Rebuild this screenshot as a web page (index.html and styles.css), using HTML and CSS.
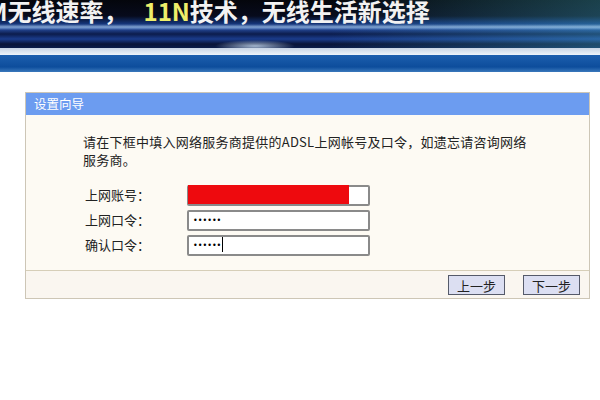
FILE: index.html
```html
<!DOCTYPE html>
<html lang="zh-CN">
  <head>
    <meta charset="UTF-8" />
    <meta name="viewport" content="width=device-width, initial-scale=1.0" />
    <title>设置向导</title>
    <link rel="stylesheet" href="styles.css">
  </head>
  <body>
    <div class="banner">
      <h1 class="slogan">M无线速率，<span class="hl">11N</span>技术，无线生活新选择</h1>
    </div>
    <div class="strip"></div>
    <div class="navbar"></div>

    <form class="wizard" action="">
      <div class="wizard-head">设置向导</div>
      <div class="wizard-body">
        <p class="tip">请在下框中填入网络服务商提供的ADSL上网帐号及口令，如遗忘请咨询网络服务商。</p>
        <div class="row">
          <label for="user">上网账号：</label>
          <div class="field">
            <input type="text" id="user" name="user" value="" />
            <span class="mask"></span>
          </div>
        </div>
        <div class="row">
          <label for="pwd">上网口令：</label>
          <div class="field">
            <input type="password" id="pwd" name="pwd" value="123456" />
          </div>
        </div>
        <div class="row">
          <label for="pwd2">确认口令：</label>
          <div class="field">
            <input type="password" id="pwd2" name="pwd2" value="123456" />
            <span class="caret"></span>
          </div>
        </div>
      </div>
      <div class="wizard-foot">
        <button type="button">上一步</button>
        <button type="button">下一步</button>
      </div>
    </form>
  </body>
</html>
```

FILE: styles.css
```css
* {
  padding: 0;
  margin: 0;
  box-sizing: border-box;
}
body {
  background: #fff;
  font-family: "Noto Sans CJK SC", "Noto Sans", sans-serif;
  font-size: 12px;
  color: #222;
}
.banner {
  height: 48px;
  overflow: hidden;
  background:
    radial-gradient(ellipse 40px 6px at 255px 46px, rgba(200, 220, 240, 0.8), rgba(200, 220, 240, 0)),
    linear-gradient(180deg, rgba(0, 0, 0, 0) 24px, rgba(200, 230, 245, 0.55) 27px, rgba(0, 0, 0, 0) 30px),
    linear-gradient(90deg, rgba(0, 0, 0, 0) 0, rgba(0, 0, 0, 0) 55%, rgba(80, 200, 220, 0.3) 100%),
    linear-gradient(180deg, #04060c 0, #070b1c 16px, #123070 23px, #2a52a8 28px, #0c1c4c 34px, #1a3c8c 39px, #0a1538 44px, #0b1d4a 48px);
}
.slogan {
  font-size: 24px;
  line-height: 20px;
  padding-top: 1px;
  font-weight: 700;
  color: #f2f2f2;
  margin-left: -13px;
  white-space: nowrap;
}
.slogan .hl {
  color: #eeee6a;
  margin-left: 16px;
}
.strip {
  height: 7px;
  background: linear-gradient(180deg, #c8d4e4, #eef4fa);
}
.navbar {
  height: 17px;
  background: linear-gradient(180deg, #1d5fae 0, #0d4d9c 70%, #3a78bc 100%);
}
.wizard {
  width: 565px;
  margin: 20px 0 0 25px;
  border: 1px solid #cdc6b6;
  background: #fdfaf3;
}
.wizard-head {
  height: 22px;
  line-height: 22px;
  padding-left: 8px;
  background: #6c9cf0;
  color: #fff;
  font-size: 12.5px;
}
.wizard-body {
  padding: 18px 0 13px 57px;
}
.tip {
  width: 452px;
  font-size: 13px;
  line-height: 18px;
  letter-spacing: 0.25px;
  margin-bottom: 13px;
}
.row {
  display: flex;
  align-items: center;
  height: 25px;
}
.row label {
  width: 104px;
  padding-left: 2px;
  font-size: 13px;
}
.field {
  position: relative;
  width: 183px;
  height: 21px;
}
.field input {
  width: 100%;
  height: 100%;
  border: 2px solid #8a8a8a;
  border-radius: 2px;
  background: #fff;
  padding-left: 4px;
  font-size: 8px;
  font-family: "DejaVu Sans", sans-serif;
  outline: none;
}
.mask {
  position: absolute;
  left: 1px;
  top: 1px;
  width: 161px;
  height: 19px;
  background: #ee0a0e;
}
.caret {
  position: absolute;
  left: 35px;
  top: 3px;
  width: 1px;
  height: 15px;
  background: #000;
}
.wizard-foot {
  height: 28px;
  border-top: 1px solid #d6ceb8;
  background: #faf6f0;
  display: flex;
  justify-content: flex-end;
  align-items: center;
  gap: 18px;
  padding-right: 9px;
}
.wizard-foot button {
  width: 57px;
  height: 20px;
  border: 1px solid #555a6a;
  background: #dcdff2;
  font-family: "Noto Sans CJK SC", sans-serif;
  font-size: 13px;
  color: #222;
  cursor: pointer;
}
```
